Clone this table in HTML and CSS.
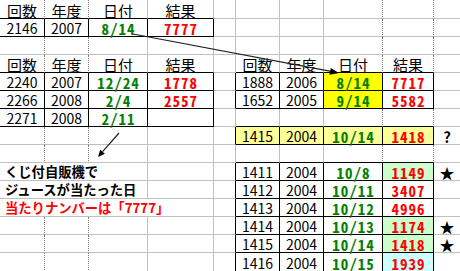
FILE: index.html
```
<!DOCTYPE html>
<html lang="ja">
<head>
<meta charset="utf-8">
<link rel="stylesheet" href="styles.css">
</head>
<body>
<div class="sheet">
  <!-- row 1 -->
  <div class="c pb kb">回数</div><div class="c pb kb">年度</div><div class="c kb">日付</div><div class="c kb">結果</div><div class="c"></div><div class="c"></div><div class="c"></div><div class="c pb"></div><div class="c pb"></div><div class="c"></div>
  <!-- row 2 -->
  <div class="c k n">2146</div><div class="c k n">2007</div><div class="c k g">8/14</div><div class="c k r">7777</div><div class="c"></div><div class="c"></div><div class="c"></div><div class="c pb"></div><div class="c pb"></div><div class="c"></div>
  <!-- row 3 -->
  <div class="c pb"></div><div class="c pb"></div><div class="c"></div><div class="c"></div><div class="c"></div><div class="c"></div><div class="c"></div><div class="c pb"></div><div class="c pb"></div><div class="c"></div>
  <!-- row 4 -->
  <div class="c pb kb">回数</div><div class="c pb kb">年度</div><div class="c kb">日付</div><div class="c kb">結果</div><div class="c"></div><div class="c kb">回数</div><div class="c kb">年度</div><div class="c pb kb">日付</div><div class="c pb kb">結果</div><div class="c"></div>
  <!-- row 5 -->
  <div class="c k n">2240</div><div class="c k n">2007</div><div class="c k g">12/24</div><div class="c k r">1778</div><div class="c kr"></div><div class="c k n">1888</div><div class="c k n">2006</div><div class="c k g y">8/14</div><div class="c k r">7717</div><div class="c"></div>
  <!-- row 6 -->
  <div class="c k n">2266</div><div class="c k n">2008</div><div class="c k g">2/4</div><div class="c k r">2557</div><div class="c kr"></div><div class="c k n">1652</div><div class="c k n">2005</div><div class="c k g y">9/14</div><div class="c k r">5582</div><div class="c"></div>
  <!-- row 7 -->
  <div class="c k n">2271</div><div class="c k n">2008</div><div class="c k g">2/11</div><div class="c k"></div><div class="c"></div><div class="c kb"></div><div class="c kb"></div><div class="c pb kb"></div><div class="c pb kb"></div><div class="c"></div>
  <!-- row 8 -->
  <div class="c pb"></div><div class="c pb"></div><div class="c"></div><div class="c"></div><div class="c kr"></div><div class="c k n ly">1415</div><div class="c k n ly">2004</div><div class="c k g ly">10/14</div><div class="c k r ly">1418</div><div class="c q">?</div>
  <!-- row 9 -->
  <div class="c pb"></div><div class="c pb"></div><div class="c"></div><div class="c"></div><div class="c"></div><div class="c kb"></div><div class="c kb"></div><div class="c pb kb"></div><div class="c pb kb"></div><div class="c"></div>
  <!-- row 10 -->
  <div class="c note">くじ付自販機で</div><div class="c"></div><div class="c kr"></div><div class="c k n">1411</div><div class="c k n">2004</div><div class="c k g">10/8</div><div class="c k r lg">1149</div><div class="c star">★</div>
  <!-- row 11 -->
  <div class="c note">ジュースが当たった日</div><div class="c"></div><div class="c kr"></div><div class="c k n">1412</div><div class="c k n">2004</div><div class="c k g">10/11</div><div class="c k r">3407</div><div class="c"></div>
  <!-- row 12 -->
  <div class="c note wide red">当たりナンバーは「7777」</div><div class="c kr"></div><div class="c k n">1413</div><div class="c k n">2004</div><div class="c k g">10/12</div><div class="c k r">4996</div><div class="c"></div>
  <!-- row 13 -->
  <div class="c pb"></div><div class="c pb"></div><div class="c"></div><div class="c"></div><div class="c kr"></div><div class="c k n">1414</div><div class="c k n">2004</div><div class="c k g">10/13</div><div class="c k r lg">1174</div><div class="c star">★</div>
  <!-- row 14 -->
  <div class="c pb"></div><div class="c pb"></div><div class="c"></div><div class="c"></div><div class="c kr"></div><div class="c k n">1415</div><div class="c k n">2004</div><div class="c k g">10/14</div><div class="c k r lg">1418</div><div class="c star">★</div>
  <!-- row 15 -->
  <div class="c pb"></div><div class="c pb"></div><div class="c"></div><div class="c"></div><div class="c kr"></div><div class="c k n">1416</div><div class="c k n">2004</div><div class="c k g">10/15</div><div class="c k r cy">1939</div><div class="c"></div>
</div>
<svg class="arrows" width="460" height="271" viewBox="0 0 460 271">
  <line x1="133" y1="34" x2="331" y2="71.3" stroke="#222" stroke-width="1.2"/>
  <polygon points="339,73 329.5,74.8 330.8,67.9" fill="#000"/>
  <line x1="119" y1="133" x2="102.6" y2="151.7" stroke="#222" stroke-width="1.2"/>
  <polygon points="98,157 104.9,153.7 100.3,149.8" fill="#000"/>
</svg>
</body>
</html>
```
FILE: styles.css
```
* { box-sizing: border-box; }
html, body { margin: 0; background: #fff; }
body {
  width: 460px;
  height: 271px;
  overflow: hidden;
  position: relative;
  font-family: "Noto Sans CJK JP", sans-serif;
  color: #000;
}
.sheet {
  display: grid;
  grid-template-columns: 45px 44px 59px 66px 22px 44px 44px 59px 51px 27px;
  grid-template-rows: 19px repeat(13, 18px) 19px;
}
.c {
  border-right: 1px solid #c0c0c0;
  border-bottom: 1px solid #c0c0c0;
  display: flex;
  align-items: flex-end;
  justify-content: center;
  font-size: 15px;
  line-height: 15px;
  white-space: nowrap;
}
.pb { border-right: 1px dotted #808080; }
.kb { border-bottom: 1px solid #000; }
.kr { border-right: 1px solid #000; }
.k { border-right: 1px solid #000; border-bottom: 1px solid #000; }
.n { font-size: 14px; line-height: 14px; padding-bottom: 1px; }
.g, .r {
  font-family: "Noto Sans Mono CJK JP", "DejaVu Sans Mono", monospace;
  font-weight: bold;
  font-size: 15px;
  line-height: 15px;
  letter-spacing: 1px;
  padding-left: 1px;
}
.g { color: #008000; }
.r { color: #ff0000; }
.y { background: #ffff00; }
.ly { background: #ffff99; }
.lg { background: #ccffcc; }
.cy { background: #ccffff; }
.note {
  grid-column: span 3;
  justify-content: flex-start;
  padding-left: 5px;
  padding-bottom: 2px;
  font-weight: bold;
  font-size: 13.3px;
  line-height: 13px;
}
.note.wide { grid-column: span 4; }
.note.red { color: #ff0000; }
.q { font-weight: bold; font-size: 15px; }
.star { font-size: 15px; }
.arrows {
  position: absolute;
  left: 0;
  top: 0;
  pointer-events: none;
}
```
